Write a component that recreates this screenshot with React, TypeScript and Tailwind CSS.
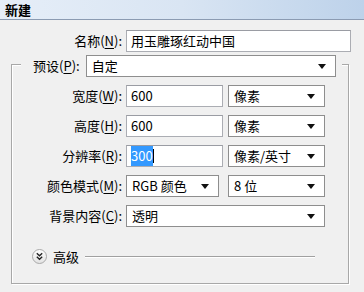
import type { ReactNode } from "react";

// Photoshop "新建" dialog

const Hotkey = ({ name, k }: { name: string; k: string }) => (
  <span className="whitespace-nowrap">
    {name}(<span className="underline underline-offset-2">{k}</span>):
  </span>
);

const Arrow = () => (
  <svg width="8" height="5" viewBox="0 0 8 5" className="shrink-0">
    <path d="M0 0h8L4 5z" fill="#111" />
  </svg>
);

const Select = ({ value, className }: { value: string; className: string }) => (
  <div
    className={`flex h-[22px] items-center justify-between border border-[#8e8e8e] bg-white pl-[5px] pr-[9px] leading-[20px] ${className}`}
  >
    <span>{value}</span>
    <Arrow />
  </div>
);

const Field = ({ children, className }: { children: ReactNode; className: string }) => (
  <div
    className={`flex h-[22px] items-center border border-[#abadb3] border-t-[#9a9ca3] bg-white pl-[4px] leading-[20px] ${className}`}
  >
    {children}
  </div>
);

const Row = ({ label, k, children }: { label: string; k: string; children: ReactNode }) => (
  <div className="mt-[8px] flex items-center">
    <div className="w-[110px] text-right">
      <Hotkey name={label} k={k} />
    </div>
    <div className="ml-[4px] flex items-center">{children}</div>
  </div>
);

export default function App() {
  return (
    <div className="h-[292px] w-[364px] overflow-hidden bg-[#f0f0f0] font-['Noto_Sans_CJK_SC',sans-serif] text-[13px] text-black">
      <div className="h-[20px] border-b border-[#8b9bb2] bg-gradient-to-r from-[#e6eef8] via-[#d9e5f3] to-[#bdd2ea] px-[5px] text-[13px] font-bold leading-[19px]">
        新建
      </div>

      <div className="mt-[10px] flex items-center">
        <div className="w-[122px] text-right">
          <Hotkey name="名称" k="N" />
        </div>
        <Field className="ml-[4px] w-[225px]">用玉雕琢红动中国</Field>
      </div>

      <div className="ml-[11px] mt-[12px] h-[220px] w-[338px] border border-[#a8a8a8] shadow-[inset_1px_1px_0_#fff,1px_1px_0_#fff]">
        <div className="-mt-[10px] ml-[9px] mr-[6px] flex items-center bg-[#f0f0f0] pl-[12px] pr-[6px]">
          <Hotkey name="预设" k="P" />
          <Select value="自定" className="ml-[6px] w-[254px]" />
        </div>

        <div className="mt-[3px]">
          <Row label="宽度" k="W">
            <Field className="w-[97px]">600</Field>
            <Select value="像素" className="ml-[5px] w-[97px]" />
          </Row>
          <Row label="高度" k="H">
            <Field className="w-[97px]">600</Field>
            <Select value="像素" className="ml-[5px] w-[97px]" />
          </Row>
          <Row label="分辨率" k="R">
            <Field className="w-[97px]">
              <span className="bg-[#3399ff] text-white">300</span>
              <span className="h-[14px] w-px bg-black" />
            </Field>
            <Select value="像素/英寸" className="ml-[5px] w-[97px]" />
          </Row>
          <Row label="颜色模式" k="M">
            <Select value="RGB 颜色" className="w-[93px]" />
            <Select value="8 位" className="ml-[9px] w-[97px]" />
          </Row>
          <Row label="背景内容" k="C">
            <Select value="透明" className="w-[199px]" />
          </Row>
        </div>

        <div className="ml-[20px] mr-[33px] mt-[20px] flex items-center">
          <svg width="15" height="15" viewBox="0 0 15 15" className="shrink-0">
            <defs>
              <linearGradient id="adv" x1="0" y1="0" x2="0" y2="1">
                <stop offset="0" stopColor="#ffffff" />
                <stop offset="1" stopColor="#e2e2e2" />
              </linearGradient>
            </defs>
            <circle cx="7.5" cy="7.5" r="7" fill="url(#adv)" stroke="#a9a9a9" />
            <path d="M4.8 4.3l2.7 2.4 2.7-2.4M4.8 7.8l2.7 2.4 2.7-2.4" fill="none" stroke="#222" strokeWidth="1.4" />
          </svg>
          <span className="ml-[6px]">高级</span>
          <div className="ml-[6px] h-px flex-1 bg-[#a0a0a0] shadow-[0_1px_0_#fff]" />
        </div>
      </div>
    </div>
  );
}
